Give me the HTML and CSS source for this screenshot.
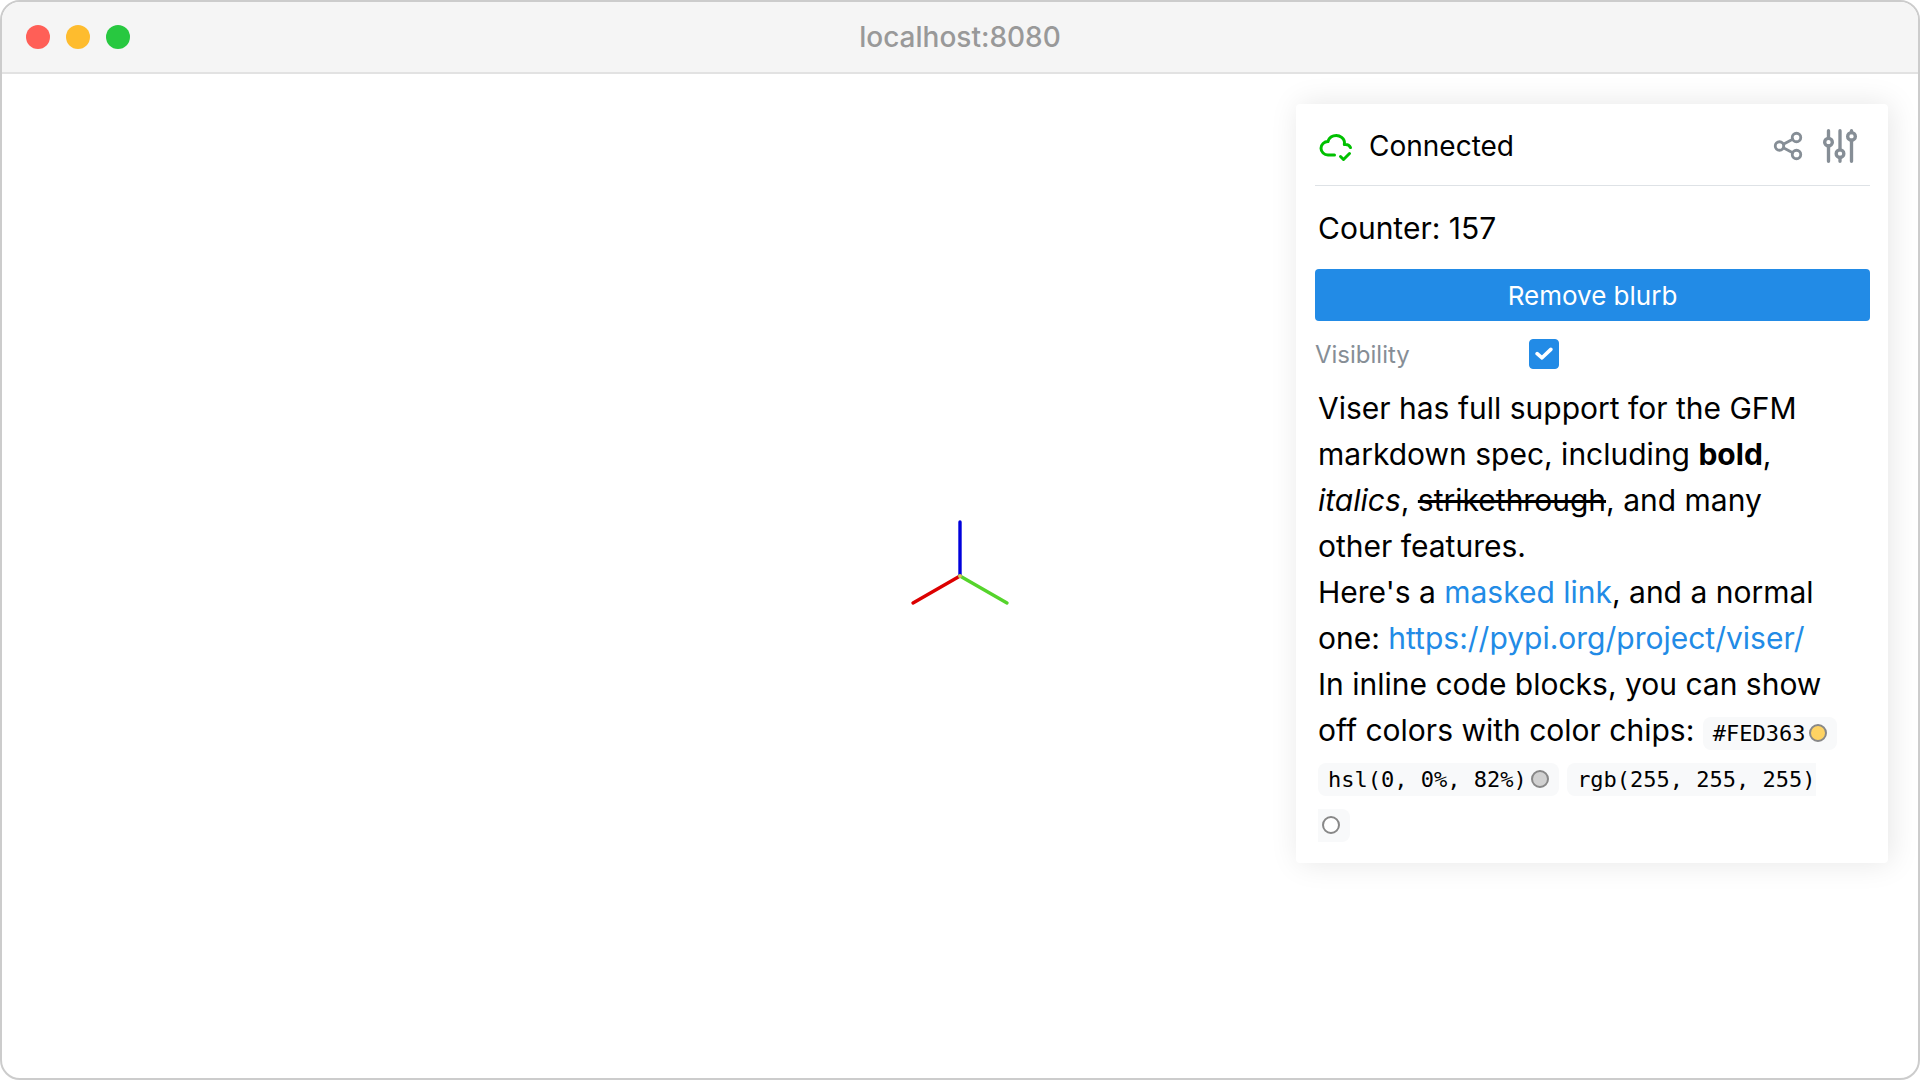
FILE: index.html
```html
<!DOCTYPE html>
<html lang="en">
<head>
    <meta charset="UTF-8">
    <meta name="viewport" content="width=device-width, initial-scale=1.0">
    <title>localhost:8080</title>
    <link rel="stylesheet" href="styles.css">
</head>
<body>
    <div class="window">
        <header class="titlebar">
            <div class="dots">
                <span class="dot red"></span>
                <span class="dot yellow"></span>
                <span class="dot green"></span>
            </div>
            <div class="address">localhost:8080</div>
        </header>
        <main class="viewport">
            <!-- World axes -->
            <svg class="axes" viewBox="-56 -56 112 112" fill="none" stroke-width="3.4" stroke-linecap="round">
                <path d="M0 0L-47 27" stroke="#dc0000"/>
                <path d="M0 0L47 27" stroke="#55d42b"/>
                <path d="M0 0V-54" stroke="#0000dc"/>
                <circle r="2" fill="#d8c850"/>
            </svg>

            <section class="panel">
                <div class="panel-header">
                    <svg class="icon icon-cloud" viewBox="0 0 24 24">
                        <path d="M11 18.004h-4.343c-2.572 -.004 -4.657 -2.011 -4.657 -4.487c0 -2.475 2.085 -4.482 4.657 -4.482c.393 -1.762 1.794 -3.2 3.675 -3.773c1.88 -.572 3.956 -.193 5.444 1c1.488 1.19 2.162 3.007 1.77 4.769h.99c1.388 0 2.585 .82 3.138 2.007"/>
                        <path d="M15 19l2 2l4 -4"/>
                    </svg>
                    <span class="status">Connected</span>
                    <button class="icon-button" type="button" aria-label="Share">
                        <svg class="icon icon-share" viewBox="0 0 24 24">
                            <circle cx="6" cy="12" r="3"/>
                            <circle cx="18" cy="6" r="3"/>
                            <circle cx="18" cy="18" r="3"/>
                            <path d="M8.7 10.7l6.6 -3.4M8.7 13.3l6.6 3.4"/>
                        </svg>
                    </button>
                    <button class="icon-button" type="button" aria-label="Settings">
                        <svg class="icon icon-settings" viewBox="0 0 24 24">
                            <circle cx="6" cy="10" r="2"/>
                            <circle cx="12" cy="16" r="2"/>
                            <circle cx="18" cy="7" r="2"/>
                            <path d="M6 4v4M6 12v8M12 4v10M12 18v2M18 4v1M18 9v11"/>
                        </svg>
                    </button>
                </div>

                <p class="markdown">Counter: 157</p>
                <button class="button" type="button">Remove blurb</button>
                <div class="field">
                    <label for="visibility">Visibility</label>
                    <span class="checkbox">
                        <input type="checkbox" id="visibility" checked>
                        <svg viewBox="0 0 10 7"><path d="M1.2 3.6L3.9 5.9L8.8 1.2"/></svg>
                    </span>
                </div>
                <div class="markdown">
                    <p>Viser has full support for the GFM markdown spec, including <strong>bold</strong>, <em>italics</em>, <del>strikethrough</del>, and many other features.</p>
                    <p>Here's a <a href="#">masked link</a>, and a normal one: <a href="https://pypi.org/project/viser/">https://pypi.org/project/viser/</a></p>
                    <p>In inline code blocks, you can show off colors with color chips: <code>#FED363<span class="chip" style="background-color: #fed363"></span></code> <code>hsl(0, 0%, 82%)<span class="chip" style="background-color: hsl(0, 0%, 82%)"></span></code> <code>rgb(255, 255, 255)<span class="chip" style="background-color: rgb(255, 255, 255)"></span></code></p>
                </div>
            </section>
        </main>
    </div>
</body>
</html>
```

FILE: styles.css
```css
* {
    box-sizing: border-box;
}
body {
    margin: 0;
    font-family: Inter, sans-serif;
    font-size: 30px;
    color: #000;
    background: #fff;
}
p {
    margin: 0;
}
.window {
    display: flex;
    flex-direction: column;
    min-height: 100vh;
    border: 2px solid #ccc;
    border-radius: 20px;
    overflow: hidden;
}
.titlebar {
    display: grid;
    grid-template-columns: 1fr auto 1fr;
    align-items: center;
    height: 72px;
    padding: 0 24px;
    background: #f5f5f5;
    border-bottom: 2px solid #e2e2e2;
}
.dots {
    display: flex;
    gap: 16px;
}
.dot {
    width: 24px;
    height: 24px;
    border-radius: 50%;
}
.red {
    background: #ff5f57;
}
.yellow {
    background: #febc2e;
}
.green {
    background: #28c840;
}
.address {
    font-size: 28px;
    font-weight: 500;
    color: #999;
}
.viewport {
    position: relative;
    flex: 1;
    display: flex;
    align-items: center;
    justify-content: center;
}
.axes {
    width: 112px;
    height: 112px;
}

/* Control panel, floats over the canvas */
.panel {
    position: absolute;
    top: 30px;
    right: 30px;
    width: 592px;
    padding: 0 18px 18px 19px;
    background: #fff;
    border-radius: 4px;
    box-shadow: 3px 0 30px rgba(0, 0, 0, 0.1);
}
.panel-header {
    display: flex;
    align-items: center;
    height: 82px;
    padding: 2px 7px 0 3px;
    margin-bottom: 19px;
    border-bottom: 1px solid #dee2e6;
}
.icon {
    display: block;
    fill: none;
    stroke: currentColor;
    stroke-width: 2;
    stroke-linecap: round;
    stroke-linejoin: round;
}
.icon-cloud {
    width: 36px;
    height: 36px;
    color: #00c000;
}
.icon-share {
    width: 34px;
    height: 34px;
}
.icon-settings {
    width: 46px;
    height: 46px;
    stroke-width: 1.75;
}
.icon-button {
    padding: 0;
    border: none;
    background: none;
    color: #868e96;
    cursor: pointer;
}
.icon-button + .icon-button {
    margin-left: 12px;
}
.status {
    flex: 1;
    margin-left: 15px;
    font-size: 28px;
}
.markdown {
    padding: 0 26px 0 3px;
    line-height: 46px;
}
.markdown a {
    color: #228be6;
    text-decoration: none;
}
.markdown a:hover {
    text-decoration: underline;
}
.button {
    display: block;
    width: 100%;
    height: 52px;
    margin: 18px 0;
    border: none;
    border-radius: 4px;
    background: #228be6;
    color: #fff;
    font-family: inherit;
    font-size: 26px;
    cursor: pointer;
}
.field {
    display: flex;
    align-items: center;
    height: 30px;
    margin-bottom: 16px;
}
.field label {
    width: 214px;
    font-size: 24px;
    color: #868e96;
}
.checkbox {
    position: relative;
    width: 30px;
    height: 30px;
}
.checkbox input {
    display: block;
    width: 30px;
    height: 30px;
    margin: 0;
    appearance: none;
    border: 1px solid #ced4da;
    border-radius: 4px;
    background: #fff;
}
.checkbox input:checked {
    border-color: #228be6;
    background: #228be6;
}
.checkbox svg {
    position: absolute;
    top: 8px;
    left: 6px;
    width: 18px;
    height: 13px;
    fill: none;
    stroke: #fff;
    stroke-width: 2;
    stroke-linecap: round;
    stroke-linejoin: round;
    pointer-events: none;
}
.markdown code {
    padding: 4px 10px;
    border-radius: 8px;
    background: #f8f9fa;
    font-family: "DejaVu Sans Mono", monospace;
    font-size: 22px;
    line-height: 1;
}
.chip {
    display: inline-block;
    width: 18px;
    height: 18px;
    margin-left: 4px;
    border: 2px solid #888;
    border-radius: 50%;
    vertical-align: -1px;
}
```
